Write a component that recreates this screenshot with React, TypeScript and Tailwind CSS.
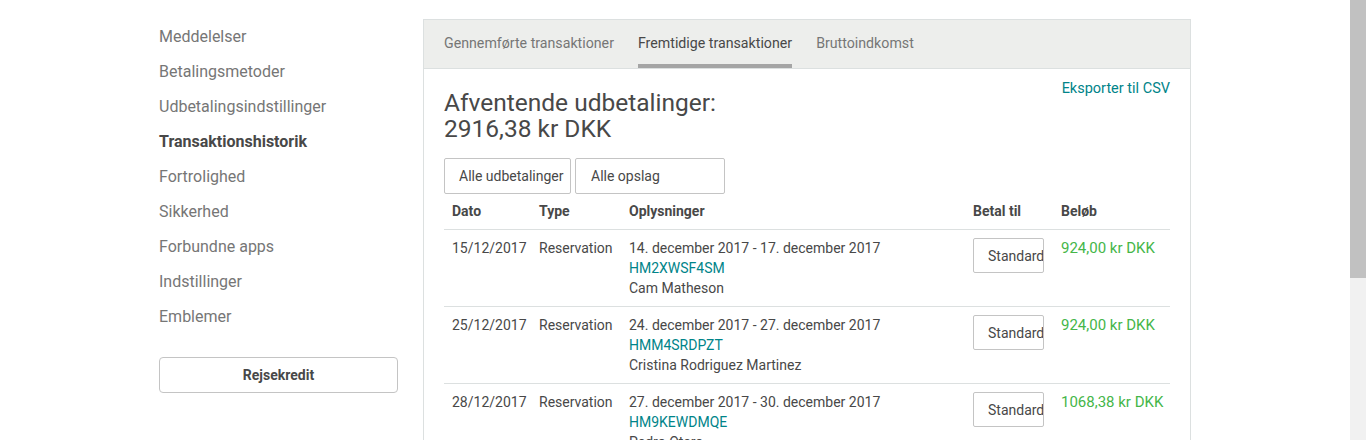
import React from 'react';

const menu = [
  'Meddelelser',
  'Betalingsmetoder',
  'Udbetalingsindstillinger',
  'Transaktionshistorik',
  'Fortrolighed',
  'Sikkerhed',
  'Forbundne apps',
  'Indstillinger',
  'Emblemer',
];

const tabs = ['Gennemførte transaktioner', 'Fremtidige transaktioner', 'Bruttoindkomst'];

const rows = [
  {
    date: '15/12/2017',
    period: '14. december 2017 - 17. december 2017',
    code: 'HM2XWSF4SM',
    guest: 'Cam Matheson',
    amount: '924,00 kr DKK',
  },
  {
    date: '25/12/2017',
    period: '24. december 2017 - 27. december 2017',
    code: 'HMM4SRDPZT',
    guest: 'Cristina Rodriguez Martinez',
    amount: '924,00 kr DKK',
  },
  {
    date: '28/12/2017',
    period: '27. december 2017 - 30. december 2017',
    code: 'HM9KEWDMQE',
    guest: 'Pedro Otero',
    amount: '1068,38 kr DKK',
  },
];

const cols = 'grid grid-cols-[87px_90px_344px_88px_117px]';

export default function App() {
  return (
    <div className="flex h-[440px] overflow-hidden bg-white text-[#484848] font-['Roboto',sans-serif]">
      <div className="flex-1">
        <div className="mx-auto flex w-[1032px] gap-[25px] pt-[19px]">
          {/* Sidebar */}
          <aside className="w-[239px] shrink-0">
            <ul>
              {menu.map((item) => (
                <li
                  key={item}
                  className={
                    item === 'Transaktionshistorik'
                      ? 'flex h-[35px] items-center text-[16px] font-bold text-[#484848]'
                      : 'flex h-[35px] items-center text-[16px] text-[#767676]'
                  }
                >
                  {item}
                </li>
              ))}
            </ul>
            <button className="mt-[23px] h-[36px] w-full rounded-[4px] border border-[#c4c4c4] text-[14px] font-bold text-[#484848]">
              Rejsekredit
            </button>
          </aside>

          {/* Panel */}
          <section className="w-[768px] border border-[#dce0e0]">
            <div className="flex h-[49px] gap-[24px] border-b border-[#dce0e0] bg-[#edeeec] px-[20px]">
              {tabs.map((t, i) => (
                <div
                  key={t}
                  className={
                    i === 1
                      ? 'flex items-center border-b-4 border-[#a5a5a5] pt-[4px] text-[14.2px] text-[#484848]'
                      : 'flex items-center border-b-4 border-transparent pt-[4px] text-[14.2px] text-[#767676]'
                  }
                >
                  {t}
                </div>
              ))}
            </div>

            <div className="px-[20px] pt-[10px]">
              <div className="flex items-start justify-between">
                <h1 className="mt-[11px] text-[24.5px] leading-[26px] text-[#484848]">
                  Afventende udbetalinger:
                  <br />
                  2916,38 kr DKK
                </h1>
                <a className="text-[14.5px] leading-[20px] text-[#008489]">Eksporter til CSV</a>
              </div>

              <div className="mt-[16px] flex gap-[4px]">
                <div className="flex h-[36px] w-[127px] items-center rounded-[2px] border border-[#c4c4c4] pl-[14px] text-[14px]">
                  Alle udbetalinger
                </div>
                <div className="flex h-[36px] w-[150px] items-center rounded-[2px] border border-[#c4c4c4] pl-[15px] text-[14px]">
                  Alle opslag
                </div>
              </div>

              <div className={`${cols} h-[36px] items-center border-b border-[#dce0e0] text-[14px] font-bold`}>
                <div className="px-[8px]">Dato</div>
                <div className="px-[8px]">Type</div>
                <div className="px-[8px]">Oplysninger</div>
                <div className="px-[8px]">Betal til</div>
                <div className="px-[8px]">Beløb</div>
              </div>

              {rows.map((r) => (
                <div key={r.code} className={`${cols} border-b border-[#dce0e0] py-[8px] text-[14px] leading-[20px]`}>
                  <div className="px-[8px]">{r.date}</div>
                  <div className="px-[8px]">Reservation</div>
                  <div className="px-[8px]">
                    <div>{r.period}</div>
                    <div className="text-[#008489]">{r.code}</div>
                    <div>{r.guest}</div>
                  </div>
                  <div className="px-[8px]">
                    <div className="flex h-[35px] w-[71px] items-center overflow-hidden whitespace-nowrap rounded-[2px] border border-[#c4c4c4] pl-[14px]">
                      Standard
                    </div>
                  </div>
                  <div className="whitespace-nowrap px-[8px] text-[15px] text-[#45b649]">{r.amount}</div>
                </div>
              ))}
            </div>
          </section>
        </div>
      </div>

      {/* scrollbar */}
      <div className="w-[16px] shrink-0 bg-[#f1f1f1]">
        <div className="h-[278px] bg-[#c1c1c1]" />
      </div>
    </div>
  );
}
